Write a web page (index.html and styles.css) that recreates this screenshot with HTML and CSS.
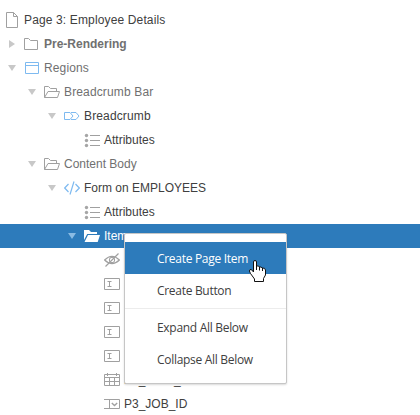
FILE: index.html
```html
<!DOCTYPE html>
<html lang="en">
<head>
<meta charset="utf-8">
<title>Page 3: Employee Details</title>
<link rel="stylesheet" href="styles.css">
</head>
<body>
<svg class="defs" width="0" height="0">
  <symbol id="page" viewBox="0 0 16 16"><path d="M2.500.5h7l4 4v11h-11zM9.500.5v4h4" /></symbol>
  <symbol id="folder" viewBox="0 0 16 16"><path d="M.5 2.500h4l2 2h7v9H.5z" /></symbol>
  <symbol id="open" viewBox="0 0 16 16"><path d="M.5 13.500v-11h4l2 2h6v3M.5 13.500l3.500-6h11.500l-2 6z" /></symbol>
  <symbol id="openfill" viewBox="0 0 16 16"><path class="white" d="M0 12V2h5l2 2h6v2H3.200zM4 7h12l-2.300 7H.5z" /></symbol>
  <symbol id="region" viewBox="0 0 16 16"><path d="M1.500 2.500h13v11h-13zM1.500 5.500h13" /></symbol>
  <symbol id="crumb" viewBox="0 0 16 16"><path d="M.5 4.500h5.500l3 3.500-3 3.500H.5zM7 4.500h5l3 3.500-3 3.500H7" /></symbol>
  <symbol id="list" viewBox="0 0 16 16"><path d="M6 3.500h10M6 8.500h10M6 13.500h10" /><g class="solid"><circle cx="2.500" cy="3.500" r="1.700" /><circle cx="2.500" cy="8.500" r="1.700" /><circle cx="2.500" cy="13.500" r="1.700" /></g></symbol>
  <symbol id="code" viewBox="0 0 16 16"><path d="M4.500 4L.7 8l3.800 4M11.500 4l3.800 4-3.800 4M10 1.500L6 14.500" stroke-width="1.200" /></symbol>
  <symbol id="hidden" viewBox="0 0 16 16"><path d="M.6 8Q8 .8 15.400 8Q8 15.200 .6 8zM1.500 14.500L14.500 1.500" stroke-width="1.200" /><circle cx="8" cy="8" r="2.700" /></symbol>
  <symbol id="text" viewBox="0 0 16 16"><path d="M.5 2.500h15v11H.5zM3.500 5.500h4M5.500 5.500v5M3.500 10.500h4" /></symbol>
  <symbol id="date" viewBox="0 0 16 16"><path d="M.5 2.500h15v11H.5zM.5 5.500h15M.5 9.500h15M5.500 5.500v8M10.500 5.500v8M3.500 1v3M12.500 1v3" /></symbol>
  <symbol id="select" viewBox="0 0 16 16"><path d="M0 3.500h15.500v9H0M5.500 3.500v9" /><path d="M7.800 7l2.700 2.500L13.200 7" stroke-width="1.400" /></symbol>
</svg>
<main class="tree">
  <div class="row l0"><svg class="icon"><use href="#page" /></svg><span class="wide">Page 3: Employee Details</span></div>
  <div class="row l1 muted"><i class="arrow closed"></i><svg class="icon"><use href="#folder" /></svg><b>Pre-Rendering</b></div>
  <div class="row l1 muted"><i class="arrow"></i><svg class="icon blue"><use href="#region" /></svg><span class="wide">Regions</span></div>
  <div class="row l2 muted"><i class="arrow"></i><svg class="icon"><use href="#open" /></svg><span class="wide">Breadcrumb Bar</span></div>
  <div class="row l3"><i class="arrow"></i><svg class="icon blue"><use href="#crumb" /></svg><span class="wide">Breadcrumb</span></div>
  <div class="row l4"><i class="arrow none"></i><svg class="icon"><use href="#list" /></svg><span>Attributes</span></div>
  <div class="row l2 muted"><i class="arrow"></i><svg class="icon"><use href="#open" /></svg><span>Content Body</span></div>
  <div class="row l3"><i class="arrow"></i><svg class="icon blue"><use href="#code" /></svg><span>Form on EMPLOYEES</span></div>
  <div class="row l4"><i class="arrow none"></i><svg class="icon"><use href="#list" /></svg><span>Attributes</span></div>
  <div class="row l4 selected"><i class="arrow"></i><svg class="icon"><use href="#openfill" /></svg><span>Items</span></div>
  <div class="row l5"><i class="arrow none"></i><svg class="icon"><use href="#hidden" /></svg></div>
  <div class="row l5"><i class="arrow none"></i><svg class="icon"><use href="#text" /></svg></div>
  <div class="row l5"><i class="arrow none"></i><svg class="icon"><use href="#text" /></svg></div>
  <div class="row l5"><i class="arrow none"></i><svg class="icon"><use href="#text" /></svg></div>
  <div class="row l5"><i class="arrow none"></i><svg class="icon"><use href="#text" /></svg></div>
  <div class="row l5"><i class="arrow none"></i><svg class="icon"><use href="#date" /></svg><span>P3_HIRE_DATE</span></div>
  <div class="row l5"><i class="arrow none"></i><svg class="icon"><use href="#select" /></svg><span>P3_JOB_ID</span></div>
</main>
<nav class="menu">
  <div class="item low active">Create Page Item</div>
  <div class="item low">Create Button</div>
  <hr>
  <div class="item">Expand All Below</div>
  <div class="item">Collapse All Below</div>
</nav>
<svg class="cursor" viewBox="0 0 17 22"><path d="M4.500 12V2Q4.500.5 6 .5T7.500 2v4q2.500-.6 2.800 1 2.300-.5 2.800 1 3-.4 3.400 2v5L14.500 18.500v3H5.500v-2.500L1.500 13.500Q-.5 10.500 1 9.500q1.500-.6 3.500 2.500" /><path d="M7.500 5v5M10.500 7v3.500M13.500 8v3" /></svg>
</body>
</html>
```
FILE: styles.css
```css
body {
  margin: 0;
  height: 415px;
  overflow: hidden;
  background: #fff;
  color: #404040;
  font: 12px/24px "Liberation Sans", Arial, sans-serif;
}
.defs { position: absolute; }
.tree { padding-top: 8px; }
.row {
  display: flex;
  align-items: center;
  height: 24px;
  gap: 4px;
  white-space: nowrap;
}
.l0 { padding-left: 4px; }
.l1 { padding-left: 4px; }
.l2 { padding-left: 24px; }
.l3 { padding-left: 44px; }
.l4 { padding-left: 64px; }
.l5 { padding-left: 84px; }
.muted { color: #707070; }
.wide { letter-spacing: .14px; }
.icon {
  flex: none;
  width: 16px;
  height: 16px;
  fill: none;
  stroke: #a0a0a0;
}
.blue { stroke: #7ebaf0; }
.white { fill: #fff; stroke: none; }
.solid { fill: #a6a6a6; stroke: none; }
.arrow {
  flex: none;
  width: 16px;
  height: 16px;
  display: grid;
  place-items: center;
}
.arrow::before {
  content: "";
  width: 8px;
  height: 6px;
  background: #c8c8c8;
  clip-path: polygon(0 0, 100% 0, 50% 100%);
}
.closed::before {
  width: 6px;
  height: 8px;
  clip-path: polygon(0 0, 100% 50%, 0 100%);
}
.none::before { display: none; }
.selected { background: #2d7bbb; color: #fff; }
.selected .arrow::before { background: #8abbe3; }
.menu {
  position: absolute;
  left: 124px;
  top: 233px;
  box-sizing: border-box;
  width: 163px;
  height: 151px;
  padding: 8px 0;
  border: 1px solid #c6c6c6;
  border-radius: 2px;
  background: #fff;
  box-shadow: 0 1px 2px rgba(0, 0, 0, .15);
  font: 12px/32px "Open Sans", "Noto Sans", sans-serif;
  letter-spacing: -.3px;
}
.item { height: 32px; padding-left: 32px; white-space: nowrap; }
.low { line-height: 34px; }
.active { background: #2d7bbb; color: #fff; }
.menu hr { margin: 2px 0 3px; border: 0; height: 1px; background: #ececec; }
.cursor {
  position: absolute;
  left: 249px;
  top: 260px;
  width: 17px;
  height: 22px;
  fill: #fff;
  stroke: #111;
}
```
